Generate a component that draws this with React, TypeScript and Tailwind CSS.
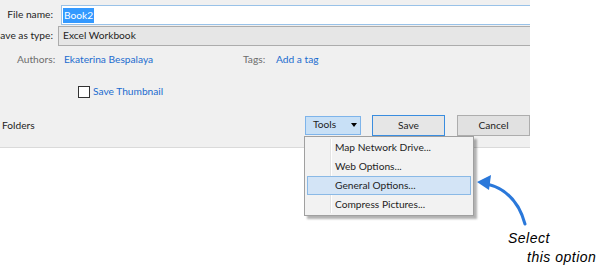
const menuItems = [
  "Map Network Drive...",
  "Web Options...",
  "General Options...",
  "Compress Pictures...",
];

export default function App() {
  return (
    <div className="relative w-[600px] h-[269px] bg-white overflow-hidden font-['Lato',sans-serif] text-[10.2px] text-[#1e1e1e]">
      {/* Save dialog panel */}
      <div className="w-[530px] h-[148px] bg-[#f0f0f0] border-b border-[#dadada] pt-[5px]">
        <div className="flex h-[20px] items-center">
          <div className="w-[53px] flex justify-end whitespace-nowrap">File name:</div>
          <div className="ml-[8px] flex-1 h-[20px] bg-white border-y border-l border-[#99c2e8] flex items-center pl-[1px]">
            <span className="bg-[#3399ff] text-white px-[1px] leading-[15px]">Book2</span>
          </div>
        </div>
        <div className="flex h-[20px] items-center mt-[1px]">
          <div className="w-[53px] flex justify-end whitespace-nowrap">Save as type:</div>
          <div className="ml-[5px] flex-1 h-[20px] bg-[#e6e6e6] border-y border-l border-[#acacac] flex items-center pl-[4px]">
            Excel Workbook
          </div>
        </div>

        <div className="flex items-center h-[16px] mt-[6px] text-[#6d6d6d] whitespace-nowrap">
          <span className="ml-[17px] w-[47px]">Authors:</span>
          <span className="w-[179px] text-[#1c6ccf]">Ekaterina Bespalaya</span>
          <span className="w-[33px]">Tags:</span>
          <span className="text-[#1c6ccf]">Add a tag</span>
        </div>

        <div className="flex items-center h-[16px] mt-[16px] ml-[78px]">
          <div className="w-[12px] h-[12px] bg-white border border-[#333333]" />
          <span className="ml-[3px] text-[#1c6ccf]">Save Thumbnail</span>
        </div>

        <div className="flex items-center mt-[15px] h-[21px]">
          <span className="ml-[2px] w-[303px]">Folders</span>
          <div className="w-[56px] h-[19px] bg-[#c8e0f6] border border-[#7eb4ea] flex items-center pl-[7px] -mt-[1px]">
            <span className="w-[38px]">Tools</span>
            <span className="w-0 h-0 border-l-[3px] border-r-[3px] border-t-[4px] border-l-transparent border-r-transparent border-t-black" />
          </div>
          <button className="ml-[11px] w-[73px] h-[21px] bg-[#e6e6e6] border border-[#3a8ddf] text-[10.2px]">
            Save
          </button>
          <button className="ml-[12px] w-[73px] h-[21px] bg-[#e1e1e1] border border-[#adadad] text-[10.2px]">
            Cancel
          </button>
        </div>
      </div>

      {/* Tools dropdown */}
      <div className="absolute left-[304px] top-[136px] w-[170px] bg-[#f2f2f2] border border-[#a0a0a0] shadow-[3px_3px_2px_rgba(0,0,0,0.3)] py-[1px]">
        <div className="absolute left-[25px] top-[2px] bottom-[2px] w-[2px] border-l border-[#e2e2e2] border-r border-r-white" />
        {menuItems.map((item) => (
          <div
            key={item}
            className={
              item === "General Options..."
                ? "relative h-[19px] mx-[2px] flex items-center pl-[27px] bg-[#d3e4f6] border border-[#8ab9e6]"
                : "relative h-[19px] mx-[2px] flex items-center pl-[27px] border border-transparent"
            }
          >
            {item}
          </div>
        ))}
      </div>

      {/* Annotation */}
      <svg className="absolute left-0 top-0" width="600" height="269">
        <path d="M487 184 Q516 191 525 224" fill="none" stroke="#2a78da" strokeWidth="3" strokeLinecap="round" />
        <polygon points="477,182 491,175 489,190" fill="#2a78da" />
      </svg>
      <div className="absolute left-[508px] top-[230px] italic font-['Liberation_Sans',sans-serif] text-[14px] tracking-[0.5px] leading-[16px] text-black">
        <div>Select</div>
        <div className="ml-[19px] mt-[3px]">this option</div>
      </div>
    </div>
  );
}
